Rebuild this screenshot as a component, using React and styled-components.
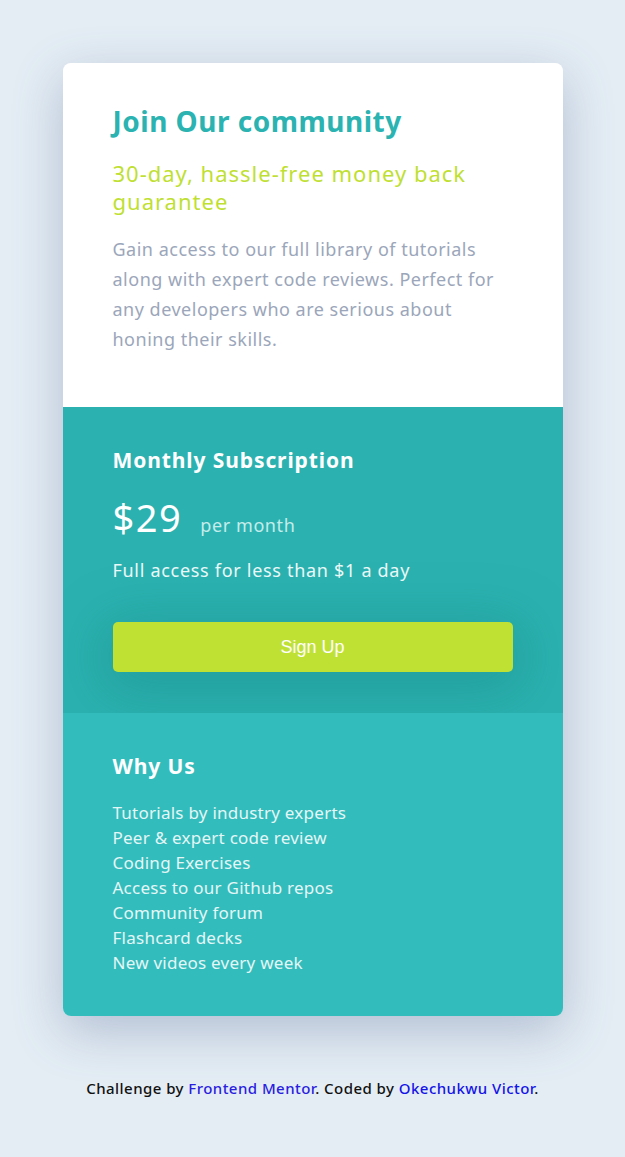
import React from 'react';
import styled, { createGlobalStyle } from 'styled-components';

const GlobalStyle = createGlobalStyle`
  body {
    margin: 0;
    background: #e4edf4;
    font-family: 'Noto Sans', 'Open Sans', sans-serif;
  }
`;

const Page = styled.main`
  min-height: 1157px;
  padding: 63px 0 40px;
  box-sizing: border-box;
  display: flex;
  flex-direction: column;
  align-items: center;
`;

const Card = styled.div`
  width: 500px;
  border-radius: 8px;
  overflow: hidden;
  box-shadow: 0 15px 50px rgba(70, 90, 140, 0.32);
`;

const Section = styled.section`
  background: ${(p) => p.bg};
  padding: ${(p) => p.pad};
`;

const Title = styled.h1`
  margin: 0;
  color: #2ab3b1;
  font-size: 28px;
  line-height: 34px;
  letter-spacing: 0.5px;
  font-weight: 700;
`;

const Subtitle = styled.h2`
  margin: 21px 0 0;
  color: #bfdf32;
  font-size: 22px;
  line-height: 28px;
  letter-spacing: 1px;
  font-weight: 400;
`;

const Text = styled.p`
  margin: 19px 0 0;
  color: #9ba6ba;
  font-size: 18px;
  line-height: 30px;
  letter-spacing: 0.5px;
`;

const Heading = styled.h3`
  margin: 0;
  color: #fff;
  font-size: 21px;
  line-height: 28px;
  letter-spacing: 0.9px;
  font-weight: 700;
`;

const PriceRow = styled.div`
  display: flex;
  align-items: baseline;
  gap: 18px;
  margin-top: 21px;
`;

const Price = styled.span`
  color: #fff;
  font-size: 38px;
  line-height: 44px;
  letter-spacing: 1.5px;
`;

const Per = styled.span`
  color: #c5eceb;
  font-size: 18px;
  letter-spacing: 0.6px;
`;

const Note = styled.p`
  margin: 17px 0 0;
  color: #eaf8f8;
  font-size: 18px;
  line-height: 28px;
  letter-spacing: 0.7px;
`;

const Button = styled.button`
  display: block;
  width: 100%;
  height: 50px;
  margin-top: 38px;
  border: none;
  border-radius: 5px;
  background: #bfe133;
  color: #fff;
  font-family: 'Liberation Sans', Arial, sans-serif;
  font-size: 18px;
  box-shadow: 0 10px 55px 12px rgba(10, 110, 110, 0.28);
  cursor: pointer;
`;

const List = styled.ul`
  list-style: none;
  margin: 20px 0 0;
  padding: 0;
`;

const Item = styled.li`
  color: #e4f6f6;
  font-size: 17px;
  line-height: 25px;
  letter-spacing: 0.25px;
`;

const Footer = styled.footer`
  margin-top: 62px;
  font-size: 15px;
  line-height: 20px;
  letter-spacing: 0.45px;
  font-weight: 500;
  color: #111;
  a {
    text-decoration: none;
    color: #2a1ee0;
  }
  a + a {
    color: #1414e8;
  }
`;

const perks = [
  'Tutorials by industry experts',
  'Peer & expert code review',
  'Coding Exercises',
  'Access to our Github repos',
  'Community forum',
  'Flashcard decks',
  'New videos every week',
];

export default function App() {
  return (
    <>
      <GlobalStyle />
      <Page>
        <Card>
          <Section bg="#fff" pad="41px 50px 53px">
            <Title>Join Our community</Title>
            <Subtitle>30-day, hassle-free money back guarantee</Subtitle>
            <Text>
              Gain access to our full library of tutorials along with expert
              code reviews. Perfect for any developers who are serious about
              honing their skills.
            </Text>
          </Section>
          <Section bg="#2bb2b0" pad="39px 50px 41px">
            <Heading>Monthly Subscription</Heading>
            <PriceRow>
              <Price>$29</Price>
              <Per>per month</Per>
            </PriceRow>
            <Note>Full access for less than $1 a day</Note>
            <Button>Sign Up</Button>
          </Section>
          <Section bg="#33bcbc" pad="39px 50px 41px">
            <Heading>Why Us</Heading>
            <List>
              {perks.map((p) => (
                <Item key={p}>{p}</Item>
              ))}
            </List>
          </Section>
        </Card>
        <Footer>
          Challenge by <a href="#">Frontend Mentor</a>. Coded by{' '}
          <a href="#">Okechukwu Victor</a>.
        </Footer>
      </Page>
    </>
  );
}
